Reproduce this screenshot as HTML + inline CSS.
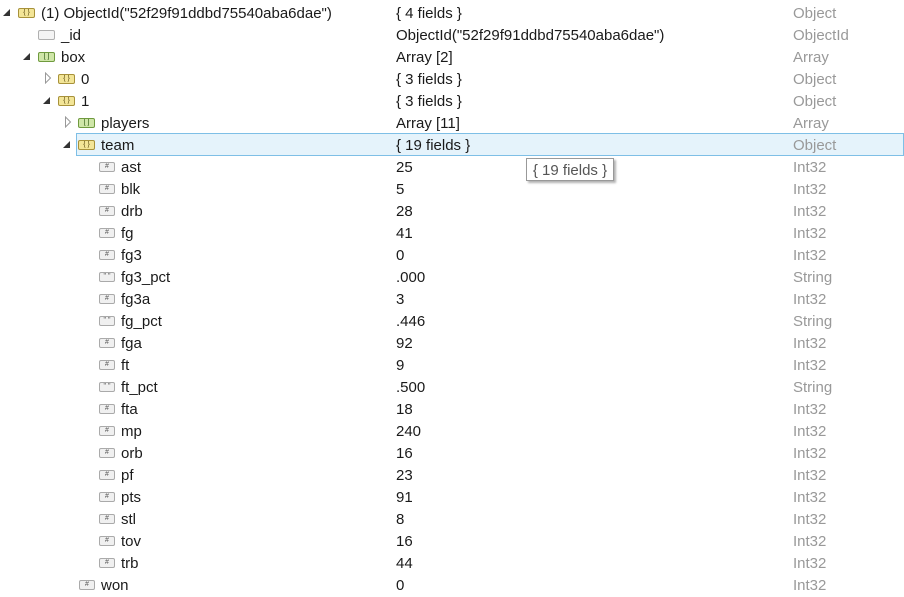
<!DOCTYPE html>
<html><head><meta charset="utf-8"><style>
body{margin:0;width:904px;height:594px;background:#fff;overflow:hidden;font-family:"Liberation Sans",sans-serif;font-size:15px;color:#1a1a1a;position:relative}
.r{position:absolute;left:0;width:904px;height:22px;line-height:22px}
.r span{position:absolute;top:2px;white-space:nowrap}
.v{left:396px}
.t{left:793px;color:#999}
.ic{position:absolute;top:7px;width:15px;height:8px;border:1px solid #999;border-radius:2px;font-size:7px;line-height:8px;text-align:center;font-style:normal;font-weight:normal;box-sizing:content-box;letter-spacing:0;overflow:hidden}
.o{background:#f3e597;border-color:#a8923a;color:#5a4a10}
.a{background:#cfe6a8;border-color:#6f9a3e;color:#24500a}
.n{background:#f0f0f0;border-color:#aaa;color:#555;width:14px}
.e{background:#f4f4f4;border-color:#b0b0b0}
svg{position:absolute}
.sel{background:#e5f3fb;border:1px solid #7ebfe6;box-sizing:border-box}
</style></head><body>
<div class="r" style="top:1px"><svg style="left:3px;top:8px" width="8" height="8"><path d="M7 0V7H0Z" fill="#333"/></svg><b class="ic o" style="left:18px">{ }</b><span style="left:41px">(1) ObjectId("52f29f91ddbd75540aba6dae")</span><span class="v">{ 4 fields }</span><span class="t">Object</span></div>
<div class="r" style="top:23px"><b class="ic e" style="left:38px"></b><span style="left:61px">_id</span><span class="v">ObjectId("52f29f91ddbd75540aba6dae")</span><span class="t">ObjectId</span></div>
<div class="r" style="top:45px"><svg style="left:23px;top:8px" width="8" height="8"><path d="M7 0V7H0Z" fill="#333"/></svg><b class="ic a" style="left:38px">[ ]</b><span style="left:61px">box</span><span class="v">Array [2]</span><span class="t">Array</span></div>
<div class="r" style="top:67px"><svg style="left:44px;top:5px" width="8" height="12"><path d="M1.5 1V11L6.5 6Z" fill="#fff" stroke="#999"/></svg><b class="ic o" style="left:58px">{ }</b><span style="left:81px">0</span><span class="v">{ 3 fields }</span><span class="t">Object</span></div>
<div class="r" style="top:89px"><svg style="left:43px;top:8px" width="8" height="8"><path d="M7 0V7H0Z" fill="#333"/></svg><b class="ic o" style="left:58px">{ }</b><span style="left:81px">1</span><span class="v">{ 3 fields }</span><span class="t">Object</span></div>
<div class="r" style="top:111px"><svg style="left:64px;top:5px" width="8" height="12"><path d="M1.5 1V11L6.5 6Z" fill="#fff" stroke="#999"/></svg><b class="ic a" style="left:78px">[ ]</b><span style="left:101px">players</span><span class="v">Array [11]</span><span class="t">Array</span></div>
<div class="sel" style="position:absolute;left:76px;top:133px;width:828px;height:23px"></div>
<div class="r" style="top:133px"><svg style="left:63px;top:8px" width="8" height="8"><path d="M7 0V7H0Z" fill="#333"/></svg><b class="ic o" style="left:78px">{ }</b><span style="left:101px">team</span><span class="v">{ 19 fields }</span><span class="t">Object</span></div>
<div class="r" style="top:155px"><b class="ic n" style="left:99px">#</b><span style="left:121px">ast</span><span class="v">25</span><span class="t">Int32</span></div>
<div class="r" style="top:177px"><b class="ic n" style="left:99px">#</b><span style="left:121px">blk</span><span class="v">5</span><span class="t">Int32</span></div>
<div class="r" style="top:199px"><b class="ic n" style="left:99px">#</b><span style="left:121px">drb</span><span class="v">28</span><span class="t">Int32</span></div>
<div class="r" style="top:221px"><b class="ic n" style="left:99px">#</b><span style="left:121px">fg</span><span class="v">41</span><span class="t">Int32</span></div>
<div class="r" style="top:243px"><b class="ic n" style="left:99px">#</b><span style="left:121px">fg3</span><span class="v">0</span><span class="t">Int32</span></div>
<div class="r" style="top:265px"><b class="ic n" style="left:99px">" "</b><span style="left:121px">fg3_pct</span><span class="v">.000</span><span class="t">String</span></div>
<div class="r" style="top:287px"><b class="ic n" style="left:99px">#</b><span style="left:121px">fg3a</span><span class="v">3</span><span class="t">Int32</span></div>
<div class="r" style="top:309px"><b class="ic n" style="left:99px">" "</b><span style="left:121px">fg_pct</span><span class="v">.446</span><span class="t">String</span></div>
<div class="r" style="top:331px"><b class="ic n" style="left:99px">#</b><span style="left:121px">fga</span><span class="v">92</span><span class="t">Int32</span></div>
<div class="r" style="top:353px"><b class="ic n" style="left:99px">#</b><span style="left:121px">ft</span><span class="v">9</span><span class="t">Int32</span></div>
<div class="r" style="top:375px"><b class="ic n" style="left:99px">" "</b><span style="left:121px">ft_pct</span><span class="v">.500</span><span class="t">String</span></div>
<div class="r" style="top:397px"><b class="ic n" style="left:99px">#</b><span style="left:121px">fta</span><span class="v">18</span><span class="t">Int32</span></div>
<div class="r" style="top:419px"><b class="ic n" style="left:99px">#</b><span style="left:121px">mp</span><span class="v">240</span><span class="t">Int32</span></div>
<div class="r" style="top:441px"><b class="ic n" style="left:99px">#</b><span style="left:121px">orb</span><span class="v">16</span><span class="t">Int32</span></div>
<div class="r" style="top:463px"><b class="ic n" style="left:99px">#</b><span style="left:121px">pf</span><span class="v">23</span><span class="t">Int32</span></div>
<div class="r" style="top:485px"><b class="ic n" style="left:99px">#</b><span style="left:121px">pts</span><span class="v">91</span><span class="t">Int32</span></div>
<div class="r" style="top:507px"><b class="ic n" style="left:99px">#</b><span style="left:121px">stl</span><span class="v">8</span><span class="t">Int32</span></div>
<div class="r" style="top:529px"><b class="ic n" style="left:99px">#</b><span style="left:121px">tov</span><span class="v">16</span><span class="t">Int32</span></div>
<div class="r" style="top:551px"><b class="ic n" style="left:99px">#</b><span style="left:121px">trb</span><span class="v">44</span><span class="t">Int32</span></div>
<div class="r" style="top:573px"><b class="ic n" style="left:79px">#</b><span style="left:101px">won</span><span class="v">0</span><span class="t">Int32</span></div>
<div style="position:absolute;left:526px;top:158px;width:88px;height:23px;border:1px solid #999;background:#fff;box-shadow:2px 2px 2px rgba(0,0,0,.3);line-height:23px;color:#555;text-align:center;box-sizing:border-box">{ 19 fields }</div>
</body></html>
